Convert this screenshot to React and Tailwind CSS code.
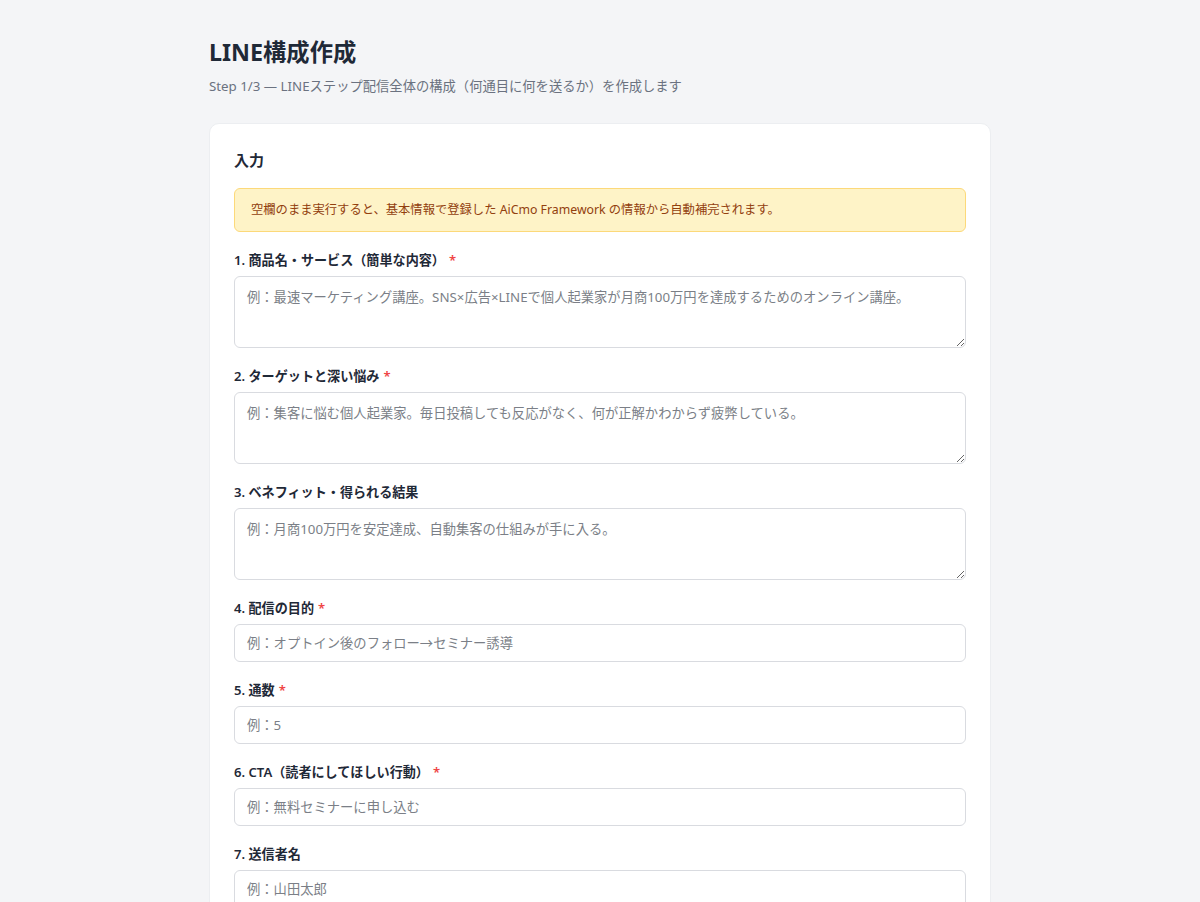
import React from 'react'

const fields = [
    { label: '1. 商品名・サービス（簡単な内容）', required: true, area: true, placeholder: '例：最速マーケティング講座。SNS×広告×LINEで個人起業家が月商100万円を達成するためのオンライン講座。' },
    { label: '2. ターゲットと深い悩み', required: true, area: true, placeholder: '例：集客に悩む個人起業家。毎日投稿しても反応がなく、何が正解かわからず疲弊している。' },
    { label: '3. ベネフィット・得られる結果', required: false, area: true, placeholder: '例：月商100万円を安定達成、自動集客の仕組みが手に入る。' },
    { label: '4. 配信の目的', required: true, placeholder: '例：オプトイン後のフォロー→セミナー誘導' },
    { label: '5. 通数', required: true, placeholder: '例：5' },
    { label: '6. CTA（読者にしてほしい行動）', required: true, placeholder: '例：無料セミナーに申し込む' },
    { label: '7. 送信者名', required: false, placeholder: '例：山田太郎' },
    { label: '8. トーン', required: false, placeholder: '例：親しみやすく、専門的' },
]

function Field({ f }) {
    const base = 'block w-full rounded-md border border-[#d9dbe0] bg-white px-3 text-[13.3px] text-gray-800 placeholder:text-[#7b7f87] outline-none focus:border-[#06c755]'
    return (
        <div>
            <label className="mb-2 block text-[13.1px] font-semibold leading-4 text-[#1f2937]">
                {f.label}
                {f.required && <span className="ml-1 text-[#ef4444]">*</span>}
            </label>
            {f.area ? (
                <textarea className={base + ' h-[72px] py-2.5 leading-5'} placeholder={f.placeholder} />
            ) : (
                <input className={base + ' h-[38px]'} placeholder={f.placeholder} />
            )}
        </div>
    )
}

export default function App() {
    return (
        <div className="min-h-screen bg-[#f4f5f7] font-['Noto_Sans','Noto_Sans_CJK_JP',sans-serif] text-[#1f2937]">
            <div className="mx-auto w-[782px] pt-[36px] pb-10">
                <h1 className="text-[23.3px] font-bold leading-8">LINE構成作成</h1>
                <p className="mt-[8px] text-[13.3px] leading-5 text-[#6b7280]">
                    Step 1/3 — LINEステップ配信全体の構成（何通目に何を送るか）を作成します
                </p>
                <div className="mt-[27px] rounded-[10px] border border-[#eceef1] bg-white p-6">
                    <h2 className="text-[15px] font-bold leading-6">入力</h2>
                    <div className="mt-4 rounded-md border border-[#fcd97a] bg-[#fef3c7] px-4 py-[11px] text-[12.3px] leading-5 text-[#92400e]">
                        空欄のまま実行すると、基本情報で登録した AiCmo Framework の情報から自動補完されます。
                    </div>
                    <div className="mt-5 flex flex-col gap-5">
                        {fields.map((f) => (
                            <Field key={f.label} f={f} />
                        ))}
                    </div>
                </div>
            </div>
        </div>
    )
}
